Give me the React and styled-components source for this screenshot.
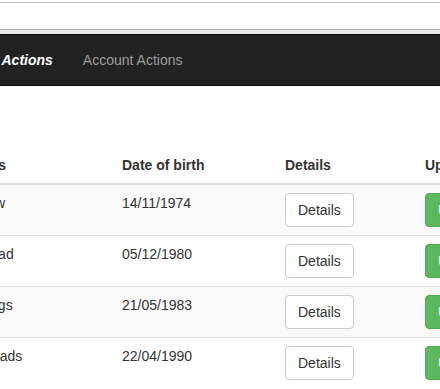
import React from 'react';
import styled, { createGlobalStyle, css } from 'styled-components';

const GlobalStyle = createGlobalStyle`
    html, body {
        margin: 0;
        padding: 0;
        background: #fff;
        overflow: hidden;
    }
    body {
        font-family: "Liberation Sans", Arial, sans-serif;
        font-size: 14px;
        line-height: 1.42857;
        color: #333;
    }
`;

const TopStrip = styled.div`
    margin-top: 2px;
    height: 26px;
    background: #fff;
    border-top: 1px solid #c2c2c2;
    border-bottom: 1px solid #acacac;
`;

const Gutter = styled.div`
    height: 4px;
    background: #ebebeb;
`;

const Navbar = styled.nav`
    height: 50px;
    background: #222;
    border-top: 1px solid #080808;
    border-bottom: 1px solid #080808;
    display: flex;
    align-items: center;
`;

const Shifted = styled.div`
    margin-left: -48px;
`;

const NavList = styled.ul`
    list-style: none;
    margin: 0;
    padding: 0;
    display: flex;
`;

const NavLink = styled.li`
    padding: 15px;
    line-height: 20px;
    white-space: nowrap;
    ${props => props.active ? css`
        color: #fff;
        font-weight: bold;
        font-style: italic;
    ` : css`
        color: #9d9d9d;
    `}
`;

const Table = styled.table`
    margin-top: 61px;
    border-collapse: collapse;
    border-spacing: 0;
    table-layout: fixed;
    width: 640px;
`;

const Th = styled.th`
    text-align: left;
    padding: 8px;
    line-height: 20px;
    font-weight: bold;
    border-bottom: 2px solid #ddd;
    white-space: nowrap;
`;

const Row = styled.tr`
    background: ${props => props.striped ? '#f9f9f9' : '#fff'};
`;

const Td = styled.td`
    padding: 8px;
    line-height: 20px;
    vertical-align: top;
    border-top: 1px solid #ddd;
    white-space: nowrap;
`;

const Button = styled.button`
    font-family: inherit;
    font-size: 14px;
    line-height: 20px;
    padding: 6px 12px;
    border-radius: 4px;
    border: 1px solid;
    cursor: pointer;
    ${props => props.success ? css`
        background: #5cb85c;
        border-color: #4cae4c;
        color: #fff;
    ` : css`
        background: #fff;
        border-color: #ccc;
        color: #333;
    `}
`;

const people = [
    { name: 'Marlow', dob: '14/11/1974' },
    { name: 'Felstead', dob: '05/12/1980' },
    { name: 'Wellings', dob: '21/05/1983' },
    { name: 'Fairheads', dob: '22/04/1990' },
];

export default function App() {
    return (
        <>
            <GlobalStyle />
            <TopStrip />
            <Gutter />
            <Navbar>
                <Shifted>
                    <NavList>
                        <NavLink active>User Actions</NavLink>
                        <NavLink>Account Actions</NavLink>
                    </NavList>
                </Shifted>
            </Navbar>
            <Shifted>
                <Table>
                    <colgroup>
                        <col style={{ width: 162 }} />
                        <col style={{ width: 163 }} />
                        <col style={{ width: 140 }} />
                        <col />
                    </colgroup>
                    <thead>
                        <tr>
                            <Th>Names</Th>
                            <Th>Date of birth</Th>
                            <Th>Details</Th>
                            <Th>Update</Th>
                        </tr>
                    </thead>
                    <tbody>
                        {people.map((p, i) => (
                            <Row key={p.name} striped={i % 2 === 0}>
                                <Td>{p.name}</Td>
                                <Td>{p.dob}</Td>
                                <Td><Button>Details</Button></Td>
                                <Td><Button success>Update</Button></Td>
                            </Row>
                        ))}
                    </tbody>
                </Table>
            </Shifted>
        </>
    );
}
